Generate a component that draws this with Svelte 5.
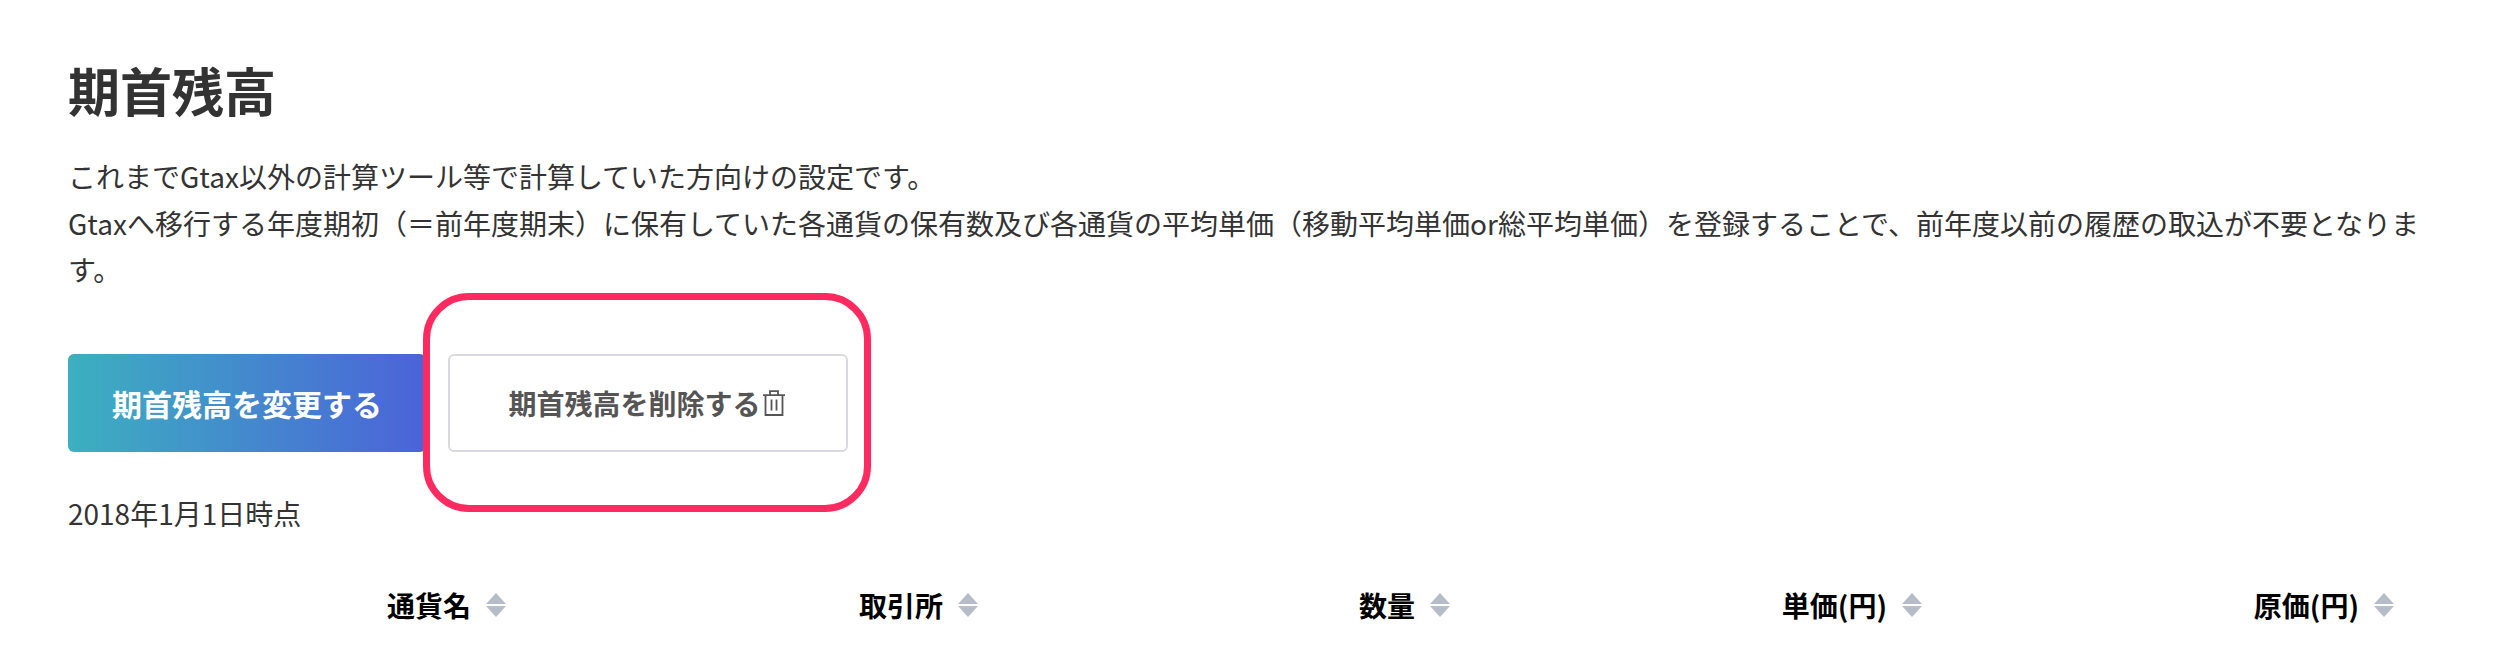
<script>
	const columns = ['通貨名', '取引所', '数量', '単価(円)', '原価(円)'];
</script>

<main class="page">
	<h1>期首残高</h1>
	<p class="lead">
		これまでGtax以外の計算ツール等で計算していた方向けの設定です。<br />
		Gtaxへ移行する年度期初（＝前年度期末）に保有していた各通貨の保有数及び各通貨の平均単価（移動平均単価or総平均単価）を登録することで、前年度以前の履歴の取込が不要となります。
	</p>

	<div class="actions">
		<button class="btn primary">期首残高を変更する</button>
		<button class="btn outline">
			期首残高を削除する
			<svg width="24" height="26" viewBox="0 0 24 26" fill="none" stroke="#555" stroke-width="1.8">
				<path d="M1 5.2h22M3.5 5.2V25h17V5.2M8 5.2V1.2h8v4M9.5 9.5v11M14.5 9.5v11" />
			</svg>
		</button>
		<div class="highlight"></div>
	</div>

	<p class="date">2018年1月1日時点</p>

	<div class="table-head">
		{#each columns as col}
			<div class="th">
				<span>{col}</span>
				<span class="sort">
					<i class="up"></i>
					<i class="down"></i>
				</span>
			</div>
		{/each}
	</div>
</main>

<style>
	:global(body) {
		margin: 0;
		background: #fff;
	}

	.page {
		height: 666px;
		box-sizing: border-box;
		padding: 56px 68px 0;
		overflow: hidden;
		font-family: 'Noto Sans CJK JP', 'Noto Sans', sans-serif;
		color: #333;
	}

	h1 {
		margin: 0;
		font-size: 52px;
		line-height: 68px;
		font-weight: 700;
		color: #333;
	}

	.lead {
		margin: 29px 0 0;
		font-size: 28px;
		line-height: 46.5px;
	}

	.actions {
		position: relative;
		display: flex;
		gap: 22px;
		margin-top: 61px;
	}

	.btn {
		height: 98px;
		box-sizing: border-box;
		border-radius: 6px;
		font-family: inherit;
		font-size: 30px;
		font-weight: 700;
		padding: 0;
	}

	.primary {
		width: 358px;
		border: none;
		color: #fff;
		background: linear-gradient(90deg, #3cb0c0, #4b63d9);
	}

	.outline {
		width: 400px;
		display: flex;
		align-items: center;
		justify-content: center;
		gap: 1px;
		padding-right: 2px;
		border: 2px solid #d9d9e5;
		background: #fff;
		color: #555;
		font-size: 28px;
	}

	.highlight {
		position: absolute;
		left: 355px;
		top: -61px;
		width: 448px;
		height: 219px;
		box-sizing: border-box;
		border: 7px solid #ff2a60;
		border-radius: 46px;
		pointer-events: none;
	}

	.date {
		margin: 38px 0 0;
		font-size: 28px;
		line-height: 46px;
	}

	.table-head {
		display: grid;
		grid-template-columns: repeat(5, 472px);
		justify-content: end;
		margin-top: 49px;
	}

	.th {
		display: flex;
		align-items: center;
		justify-content: flex-end;
		gap: 15px;
		padding-right: 40px;
		font-size: 28px;
		font-weight: 700;
		color: #000;
	}

	.sort {
		display: flex;
		flex-direction: column;
		gap: 2px;
	}

	.sort i {
		display: block;
		width: 0;
		height: 0;
		border-left: 10px solid transparent;
		border-right: 10px solid transparent;
	}

	.up {
		border-bottom: 11px solid #b6bdc9;
	}

	.down {
		border-top: 11px solid #b6bdc9;
	}
</style>
